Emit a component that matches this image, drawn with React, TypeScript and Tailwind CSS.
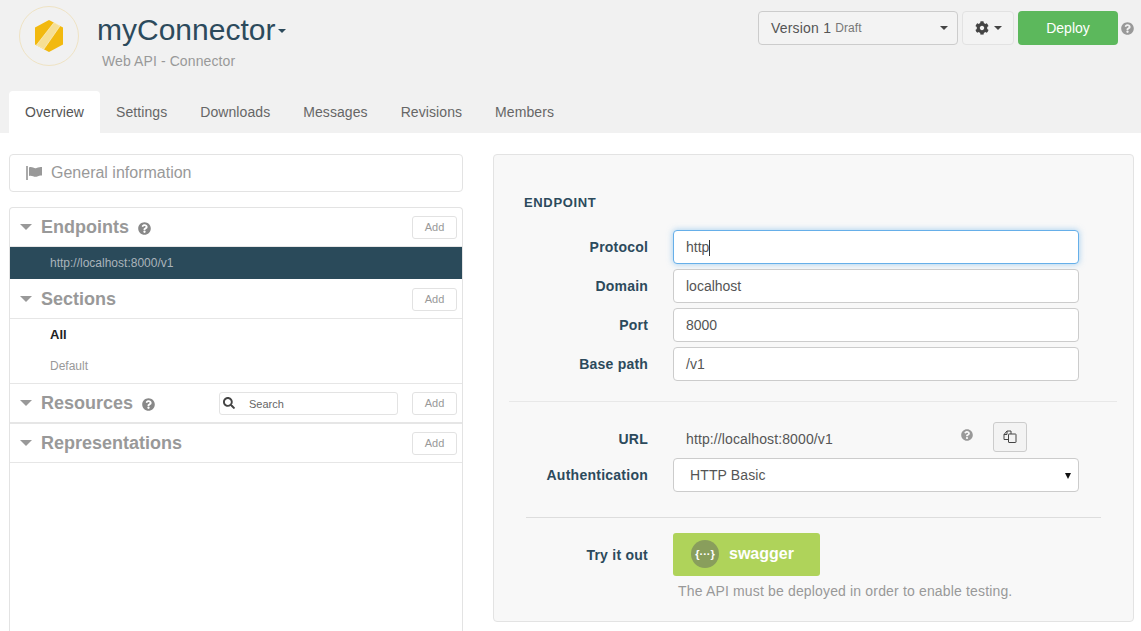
import { FaCog, FaQuestionCircle, FaSearch } from "react-icons/fa";

const tabs = ["Overview", "Settings", "Downloads", "Messages", "Revisions", "Members"];

const fields = [
  { label: "Protocol", value: "http", focused: true },
  { label: "Domain", value: "localhost", focused: false },
  { label: "Port", value: "8000", focused: false },
  { label: "Base path", value: "/v1", focused: false },
];

function Logo() {
  return (
    <div className="flex h-[60px] w-[60px] shrink-0 items-center justify-center rounded-full border border-[#efe3c4]">
      <svg width="30" height="32" viewBox="0 0 30 32">
        <polygon points="15,0 29,7.5 29,24.5 15,32 1,24.5 1,7.5" fill="#f2b90f" />
        <polygon points="20,2.5 26,6 10,29 2.5,25" fill="#f6df94" stroke="#fbf3d6" strokeWidth="0.6" />
      </svg>
    </div>
  );
}

function AddButton() {
  return (
    <button className="h-[23px] w-[45px] rounded-[3px] border border-[#e2e2e2] bg-white text-[11px] text-[#999]">
      Add
    </button>
  );
}

function SectionHeader({
  title,
  help,
  tall,
  children,
}: {
  title: string;
  help?: boolean;
  tall?: boolean;
  children?: React.ReactNode;
}) {
  return (
    <div
      className={`flex items-center border-b border-[#e6e6e6] pl-[10px] pr-[5px] ${
        tall ? "h-[40px] pt-[1px]" : "h-[39px]"
      }`}
    >
      <span className="mr-[9px] inline-block h-0 w-0 border-x-[6px] border-t-[6px] border-x-transparent border-t-[#999]" />
      <span className="text-[18px] font-bold text-[#999]">{title}</span>
      {help && <FaQuestionCircle className="ml-[9px] mt-[2px] text-[13px] text-[#888]" />}
      <div className="ml-auto flex items-center gap-[14px]">
        {children}
        <AddButton />
      </div>
    </div>
  );
}

export default function App() {
  return (
    <div className="min-h-[631px] overflow-hidden bg-white font-['Liberation_Sans',Arial,sans-serif] text-[14px] text-[#555]">
      {/* Header */}
      <div className="h-[133px] bg-[#f1f1f1]">
        <div className="flex h-[91px] items-start">
          <div className="ml-[19px] mt-[6px]">
            <Logo />
          </div>
          <div className="ml-[18px] mt-[11px]">
            <div className="flex items-center">
              <span className="text-[30px] leading-[38px] text-[#2c4a5c]">myConnector</span>
              <span className="ml-[3px] mt-[2px] inline-block h-0 w-0 border-x-[4px] border-t-[4px] border-x-transparent border-t-[#2c4a5c]" />
            </div>
            <div className="ml-[5px] mt-[2px] text-[14px] tracking-[0.1px] text-[#999]">Web API - Connector</div>
          </div>
          <div className="ml-auto mr-[7px] mt-[11px] flex items-start">
            <div className="flex h-[34px] w-[200px] items-center rounded-[4px] border border-[#ccc] bg-[#f3f3f3] pl-[12px] pr-[9px]">
              <span className="tracking-[0.2px] text-[#555]">Version 1</span>
              <span className="ml-[4px] text-[12px] tracking-[0.1px] text-[#777]">Draft</span>
              <span className="ml-auto inline-block h-0 w-0 border-x-[4px] border-t-[4px] border-x-transparent border-t-[#444]" />
            </div>
            <button className="ml-[4px] flex h-[34px] w-[52px] items-center justify-center gap-[5px] rounded-[4px] border border-[#e2e2e2] bg-[#f3f3f3]">
              <FaCog className="text-[14px] text-[#444]" />
              <span className="inline-block h-0 w-0 border-x-[4px] border-t-[4px] border-x-transparent border-t-[#444]" />
            </button>
            <button className="ml-[4px] h-[34px] w-[100px] rounded-[4px] bg-[#5cb85c] text-white">Deploy</button>
            <FaQuestionCircle className="ml-[3px] mt-[11px] text-[13px] text-[#999]" />
          </div>
        </div>
        <div className="flex h-[42px] pl-[9px]">
          {tabs.map((tab, i) => (
            <div
              key={tab}
              className={`flex items-center rounded-t-[4px] px-[16px] pt-[1px] tracking-[0.08px] ${
                i === 0 ? "bg-white text-[#555]" : "mr-[1px] text-[#666]"
              }`}
            >
              {tab}
            </div>
          ))}
        </div>
      </div>

      {/* Content */}
      <div className="flex items-start pl-[9px] pt-[21px]">
        <div className="w-[454px] shrink-0">
          <div className="flex h-[38px] items-center rounded-[4px] border border-[#e3e3e3] pl-[16px]">
            <svg width="16" height="14" viewBox="0 0 16 14" fill="#999">
              <rect x="0" y="0" width="2" height="14" fill="#aaa" />
              <path d="M3 1.5 C6 0 8 3 10.5 2 C12.5 1.2 14.5 1 16 1 V9.5 C14 9.5 12.5 10 10.5 10.7 C8 11.5 6 8.8 3 10 Z" />
            </svg>
            <span className="ml-[9px] text-[16px] text-[#999]">General information</span>
          </div>
          <div className="mt-[15px] h-[430px] rounded-t-[4px] border-x border-t border-[#e3e3e3]">
            <SectionHeader title="Endpoints" help />
            <div className="flex h-[32px] items-center bg-[#2a4a5a] pl-[40px] text-[12px] text-[#aab4ba]">
              http://localhost:8000/v1
            </div>
            <SectionHeader title="Sections" tall />
            <div className="flex h-[32px] items-center pl-[40px] text-[13px] font-bold text-[#222]">All</div>
            <div className="flex h-[33px] items-center border-b border-[#e6e6e6] pb-[2px] pl-[40px] text-[12px] text-[#999]">
              Default
            </div>
            <SectionHeader title="Resources" help>
              <div className="flex h-[23px] w-[179px] items-center rounded-[3px] border border-[#e3e3e3] pl-[3px]">
                <FaSearch className="text-[12px] text-[#444]" />
                <span className="ml-[14px] mt-[2px] text-[11px] text-[#666]">Search</span>
              </div>
            </SectionHeader>
            <div className="h-[1px] bg-[#e6e6e6]" />
            <SectionHeader title="Representations" />
          </div>
        </div>

        <div className="ml-[30px] h-[468px] w-[641px] shrink-0 rounded-[4px] border border-[#e3e3e3] bg-[#f8f8f8] pt-[38px]">
          <div className="pl-[30px] text-[13px] font-bold tracking-[0.65px] text-[#2c4a5c]">ENDPOINT</div>
          <div className="mt-[17px] flex flex-col gap-[5px]">
            {fields.map((f) => (
              <div key={f.label} className="flex items-center">
                <div className="mt-[2px] w-[154px] text-right text-[14px] font-bold tracking-[0.2px] text-[#2c4a5c]">
                  {f.label}
                </div>
                <div
                  className={`ml-[25px] flex h-[34px] w-[406px] items-center rounded-[4px] border bg-white pl-[12px] pt-[2px] text-[#555] ${
                    f.focused
                      ? "border-[#66afe9] shadow-[0_0_6px_rgba(102,175,233,0.6)]"
                      : "border-[#ccc]"
                  }`}
                >
                  {f.value}
                  {f.focused && <span className="h-[16px] w-[1px] bg-[#333]" />}
                </div>
              </div>
            ))}
          </div>
          <div className="ml-[15px] mr-[16px] mt-[20px] h-[1px] bg-[#e8e8e8]" />
          <div className="mt-[20px] flex h-[30px] items-center">
            <div className="mt-[6px] w-[154px] text-right text-[14px] font-bold tracking-[0.25px] text-[#2c4a5c]">URL</div>
            <div className="ml-[38px] mt-[5px] tracking-[0.12px] text-[#555]">http://localhost:8000/v1</div>
            <FaQuestionCircle className="ml-[128px] mb-[4px] text-[12px] text-[#999]" />
            <button className="ml-[20px] flex h-[30px] w-[34px] items-center justify-center rounded-[3px] border border-[#ccc] bg-[#f3f3f3]">
              <svg width="14" height="13" viewBox="0 0 14 13" fill="none" stroke="#444" strokeWidth="1">
                <path d="M5.5 9.5 H1 V4.5 L4 1 H8 V4" />
                <path d="M1 4.5 H4 V1" />
                <rect x="5.5" y="4" width="7.5" height="8.5" rx="0.5" fill="#f3f3f3" />
              </svg>
            </button>
          </div>
          <div className="mt-[6px] flex items-center">
            <div className="mt-[2px] w-[154px] text-right text-[14px] font-bold tracking-[0.25px] text-[#2c4a5c]">
              Authentication
            </div>
            <div className="ml-[25px] flex h-[34px] w-[406px] items-center rounded-[4px] border border-[#ccc] bg-white pl-[16px] pr-[7px] pt-[2px] tracking-[0.12px] text-[#555]">
              HTTP Basic
              <span className="ml-auto inline-block h-0 w-0 border-x-[3px] border-t-[6px] border-x-transparent border-t-[#111]" />
            </div>
          </div>
          <div className="ml-[32px] mr-[32px] mt-[25px] h-[1px] bg-[#ddd]" />
          <div className="mt-[15px] flex items-center">
            <div className="mt-[2px] w-[154px] text-right text-[14px] font-bold tracking-[0.25px] text-[#2c4a5c]">Try it out</div>
            <div className="ml-[25px] flex h-[43px] w-[147px] items-center rounded-[3px] bg-[#afd35a] pl-[18px]">
              <div className="flex h-[28px] w-[28px] items-center justify-center rounded-full bg-[#899e5c] text-[11px] font-bold text-white">
                {"{···}"}
              </div>
              <span className="ml-[10px] text-[16px] font-bold text-white">swagger</span>
            </div>
          </div>
          <div className="ml-[184px] mt-[5px] tracking-[0.16px] text-[#999]">The API must be deployed in order to enable testing.</div>
        </div>
      </div>
    </div>
  );
}
